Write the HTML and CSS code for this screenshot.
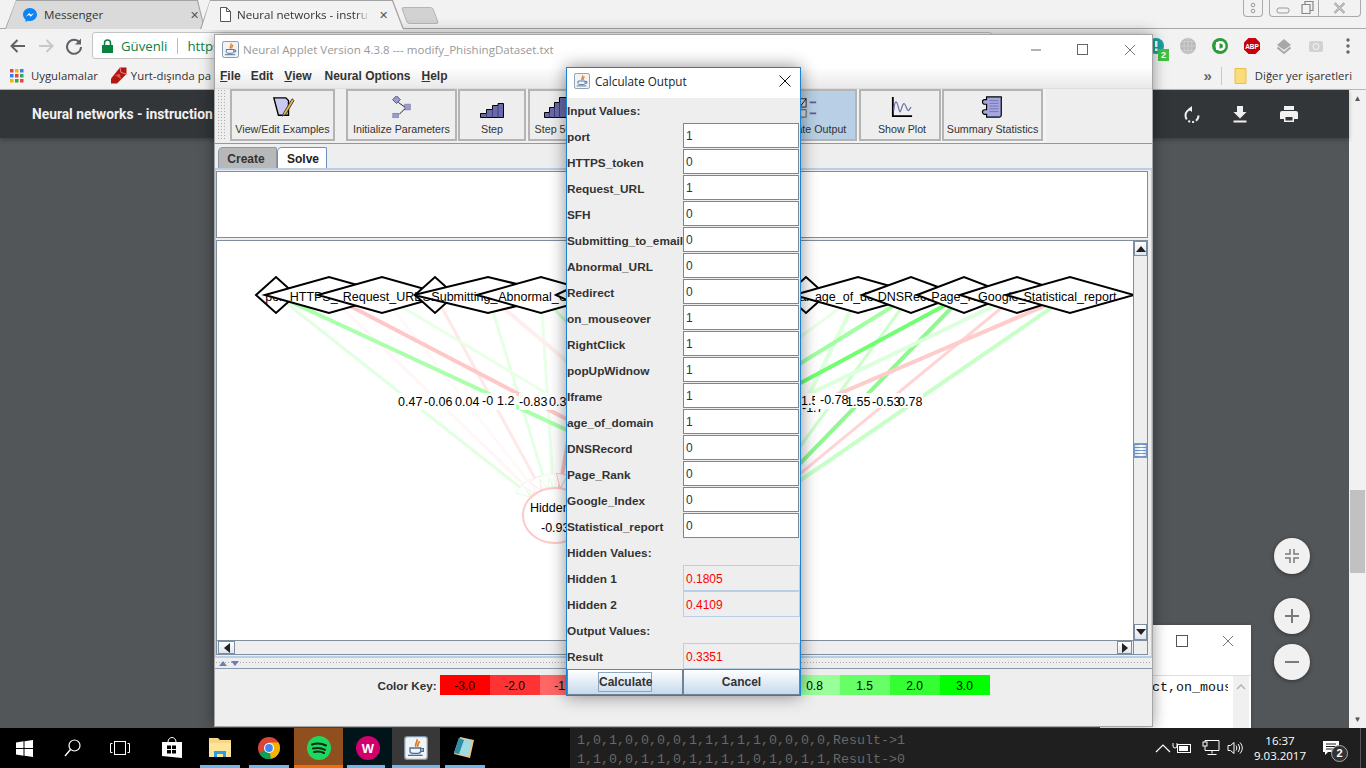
FILE: index.html
```html
<!DOCTYPE html>
<html lang="tr">
<head>
<meta charset="utf-8">
<title>Neural Applet</title>
<link rel="stylesheet" href="styles.css">
</head>
<body>
<svg class="defs" width="0" height="0" aria-hidden="true">
  <symbol id="java" viewBox="0 0 18 18">
    <rect x="0.5" y="0.5" width="17" height="17" rx="2" fill="#f1f3f5" stroke="#7f93a6"/>
    <path d="M9.5 2.5c1.5 2-2 3-0.5 5.5M11.5 4c0 1.500-2 2-1 4" fill="none" stroke="#e2761b" stroke-width="1.300"/>
    <path d="M4.500 9h8v2.500c0 1-1 1.500-2 1.500h-4c-1 0-2-.5-2-1.500zM12.500 9.500h2v2h-2" fill="none" stroke="#4a6f9c" stroke-width="1"/>
    <path d="M3 14.500h11" stroke="#4a6f9c" stroke-width="1"/>
  </symbol>
</svg>

<div class="desktop">
  <div class="browser">
    <div class="tabstrip">
      <div class="tab tab-inactive">
        <svg class="tab-ico" width="16" height="16" viewBox="0 0 16 16"><path d="M8 1C4 1 1 4 1 7.600c0 2 1 3.800 2.500 5v2.400l2.300-1.300c.7.200 1.400.3 2.200.3 4 0 7-3 7-6.400S12 1 8 1z" fill="#0a84f5"/><path d="M3.800 9.700 7.200 6l1.800 1.800L12.200 6 8.800 9.700 7 7.900z" fill="#fff"/></svg>
        <span class="tab-text">Messenger</span>
        <span class="tab-x">✕</span>
      </div>
      <div class="tab tab-active">
        <svg class="tab-ico" width="12" height="15" viewBox="0 0 12 15"><path d="M1.500 .5h6l4 4v10h-10zM7.500 .5v4h4" fill="#fff" stroke="#555"/></svg>
        <span class="tab-text tab-fade">Neural networks - instruc</span>
        <span class="tab-x">✕</span>
      </div>
      <div class="newtab"></div>
      <div class="strip-space"></div>
      <div class="mini-ctl"><svg width="6" height="12" viewBox="0 0 6 12"><circle cx="3" cy="3" r="1.800" fill="none" stroke="#999"/><circle cx="3" cy="9" r="1.800" fill="none" stroke="#999"/></svg></div>
      <div class="win-ctl">
        <svg width="28" height="16" viewBox="0 0 28 16"><rect x="7" y="8" width="12" height="5" rx="2" fill="none" stroke="#999"/></svg>
        <svg width="20" height="16" viewBox="0 0 20 16"><path d="M4 4.500h8v9h-8zM7 4.500v-3h8v9h-3" fill="none" stroke="#888" stroke-width="1.200"/></svg>
        <svg class="ctl-x" width="42" height="16" viewBox="0 0 42 16"><path d="M16 3l10 10M26 3L16 13" stroke="#999" stroke-width="2.200"/><path d="M16 3l10 10M26 3L16 13" stroke="#f2f2f2" stroke-width=".8"/></svg>
      </div>
    </div>

    <div class="toolbar">
      <svg class="nav" width="20" height="20" viewBox="0 0 20 20"><path d="M17 10H4M9.500 4 3.500 10l6 6" fill="none" stroke="#5f6368" stroke-width="2"/></svg>
      <svg class="nav" width="20" height="20" viewBox="0 0 20 20"><path d="M3 10h13M10.500 4l6 6-6 6" fill="none" stroke="#c8c8c8" stroke-width="2"/></svg>
      <svg class="nav" width="20" height="20" viewBox="0 0 20 20"><path d="M15.500 6.500A7 7 0 1 0 17 11" fill="none" stroke="#5f6368" stroke-width="2"/><path d="M17 2.500v6h-6z" fill="#5f6368"/></svg>
      <div class="omnibox">
        <svg width="11" height="14" viewBox="0 0 11 14"><rect y="6" width="11" height="8" fill="#0b8043"/><path d="M2.500 6V4a3 3 0 0 1 6 0v2" fill="none" stroke="#0b8043" stroke-width="1.500"/></svg>
        <span class="secure">Güvenli</span>
        <span class="omni-sep"></span>
        <span class="secure">https</span>
      </div>
      <div class="ext-space"></div>
      <div class="ext ext-pin"><svg width="18" height="18" viewBox="0 0 18 18"><circle cx="9" cy="9" r="8" fill="#17a3a3"/><rect x="8" y="4" width="2.500" height="6" fill="#fff"/><rect x="8" y="11.500" width="2.500" height="2.500" fill="#fff"/></svg><span class="ext-badge">2</span></div>
      <div class="ext"><svg width="18" height="18" viewBox="0 0 18 18"><circle cx="9" cy="9" r="8" fill="#b9b9b9"/><path d="M1 9h16M9 1v16M3 4.500h12M3 13.500h12" stroke="#cfcfcf"/><ellipse cx="9" cy="9" rx="4" ry="8" fill="none" stroke="#cfcfcf"/></svg></div>
      <div class="ext"><svg width="18" height="18" viewBox="0 0 18 18"><circle cx="9" cy="9" r="8" fill="#2e9b3b"/><circle cx="9.500" cy="9" r="5" fill="#fff"/><rect x="5" y="5" width="2.500" height="8" fill="#fff"/><path d="M8.500 6.500h1a2.500 2.500 0 0 1 0 5h-1z" fill="#2e9b3b"/></svg></div>
      <div class="ext"><svg width="18" height="18" viewBox="0 0 18 18"><path d="M5.500 1h7L17 5.500v7L12.500 17h-7L1 12.500v-7z" fill="#c8000b"/><text class="abp" x="9" y="11.500" text-anchor="middle">ABP</text></svg></div>
      <div class="ext"><svg width="18" height="18" viewBox="0 0 18 18"><path d="M9 2l7 6-7 5-7-5z" fill="#a8a8a8"/><path d="M2.500 10.500 9 16l6.500-5.500" fill="none" stroke="#a8a8a8" stroke-width="2"/></svg></div>
      <div class="ext"><svg width="18" height="18" viewBox="0 0 18 18"><rect x="2" y="4" width="14" height="11" rx="2" fill="#d2d2d2"/><circle cx="9" cy="9.500" r="3" fill="none" stroke="#f4f4f4"/></svg></div>
      <div class="ext"><svg width="6" height="18" viewBox="0 0 6 18"><circle cx="3" cy="3" r="1.700" fill="#666"/><circle cx="3" cy="9" r="1.700" fill="#666"/><circle cx="3" cy="15" r="1.700" fill="#666"/></svg></div>
    </div>

    <div class="bookmarks">
      <svg width="14" height="14" viewBox="0 0 14 14"><rect width="3.500" height="3.500" fill="#e8453c"/><rect x="5" width="3.500" height="3.500" fill="#f4b400"/><rect x="10" width="3.500" height="3.500" fill="#3b7de8"/><rect y="5" width="3.500" height="3.500" fill="#3b7de8"/><rect x="5" y="5" width="3.500" height="3.500" fill="#e8453c"/><rect x="10" y="5" width="3.500" height="3.500" fill="#34a853"/><rect y="10" width="3.500" height="3.500" fill="#f4b400"/><rect x="5" y="10" width="3.500" height="3.500" fill="#34a853"/><rect x="10" y="10" width="3.500" height="3.500" fill="#e8453c"/></svg>
      <span class="bm bm-apps">Uygulamalar</span>
      <svg class="ruby" width="17" height="17" viewBox="0 0 17 17"><path d="M10 0.500h6.500V7L7 16.500H1v-5z" fill="#b3150f"/><path d="M5 8l5-1 1 5z" fill="#e2564e"/><path d="M10 .5l1 5 5.500 1.500" fill="none" stroke="#e88"/></svg>
      <span class="bm">Yurt-dışında pa</span>
      <div class="bm-space"></div>
      <span class="bm-more">»</span>
      <span class="bm-sep"></span>
      <svg width="13" height="16" viewBox="0 0 13 16"><path d="M1 .5h11v15H1z" fill="#fbdc7a" stroke="#e8c148"/></svg>
      <span class="bm bm-other">Diğer yer işaretleri</span>
    </div>

    <div class="page-area">
      <div class="pdf">
        <div class="pdf-bar">
          <span class="pdf-title">Neural networks - instruction</span>
          <div class="pdf-space"></div>
          <div class="pdf-ico"><svg width="22" height="22" viewBox="0 0 22 22"><path d="M11 3 7 6l4 3z" fill="#f1f1f1"/><path d="M11 6a6.500 6.500 0 1 0 6.500 6.500" fill="none" stroke="#f1f1f1" stroke-width="2" stroke-dasharray="14 2 2 2 2 2"/></svg></div>
          <div class="pdf-ico"><svg width="22" height="22" viewBox="0 0 22 22"><path d="M8 3h6v6h3.500L11 15.500 4.500 9H8zM4.500 17.500h13v2h-13z" fill="#f1f1f1"/></svg></div>
          <div class="pdf-ico"><svg width="22" height="22" viewBox="0 0 22 22"><path d="M6 3h10v4H6z" fill="#f1f1f1"/><path d="M4 8h14a2 2 0 0 1 2 2v6h-4v3H6v-3H2v-6a2 2 0 0 1 2-2z" fill="#f1f1f1"/><path d="M7.500 14h7v3.500h-7z" fill="#323639"/></svg></div>
        </div>
        <div class="viewer">
          <div class="fab fab-fit"><svg width="16" height="16" viewBox="0 0 16 16"><path d="M6 1v5H1M10 1v5h5M6 15v-5H1M10 15v-5h5" fill="none" stroke="#7a7a7a" stroke-width="1.500"/></svg></div>
          <div class="fab fab-plus"><svg width="16" height="16" viewBox="0 0 16 16"><path d="M8 1v14M1 8h14" stroke="#7a7a7a" stroke-width="2"/></svg></div>
          <div class="fab fab-minus"><svg width="16" height="16" viewBox="0 0 16 16"><path d="M1 8h14" stroke="#7a7a7a" stroke-width="2"/></svg></div>
        </div>
      </div>
      <div class="pagebar">
        <span class="pagebar-arrow">▲</span>
        <div class="pagebar-track"></div>
        <div class="pagebar-thumb"></div>
        <div class="pagebar-rest"></div>
        <span class="pagebar-arrow">▼</span>
      </div>
    </div>
  </div>

  <div class="notepad">
    <div class="np-title">
      <svg width="12" height="12" viewBox="0 0 12 12"><rect x=".5" y=".5" width="11" height="11" fill="none" stroke="#555"/></svg>
      <svg width="12" height="12" viewBox="0 0 12 12"><path d="M1 1l10 10M11 1 1 11" stroke="#777"/></svg>
    </div>
    <div class="np-body">
      <span class="np-text">ct,on_mous</span>
      <div class="np-scroll"><svg width="10" height="6" viewBox="0 0 10 6"><path d="M1 5l4-4 4 4" fill="none" stroke="#b5b5b5" stroke-width="1.500"/></svg></div>
    </div>
  </div>

  <div class="neural">
    <div class="n-head">
      <div class="n-title">
        <svg class="n-java" width="17" height="17"><use href="#java"/></svg>
        <span class="n-caption">Neural Applet Version 4.3.8 --- modify_PhishingDataset.txt</span>
        <div class="n-controls">
          <svg width="12" height="12" viewBox="0 0 12 12"><path d="M1 6h10" stroke="#666"/></svg>
          <svg width="12" height="12" viewBox="0 0 12 12"><rect x=".5" y=".5" width="10" height="10" fill="none" stroke="#666"/></svg>
          <svg width="12" height="12" viewBox="0 0 12 12"><path d="M1 1l10 10M11 1 1 11" stroke="#777"/></svg>
        </div>
      </div>
      <div class="n-menu">
        <span class="m-item"><u>F</u>ile</span>
        <span class="m-item">Edit</span>
        <span class="m-item"><u>V</u>iew</span>
        <span class="m-item">Neural Options</span>
        <span class="m-item"><u>H</u>elp</span>
      </div>
    </div>

    <div class="n-tools">
      <div class="grip"></div>
      <div class="tbtn tb-view">
        <svg width="24" height="22" viewBox="0 0 24 24"><path d="M2 2h13l3 3v16H7z" fill="#c9c9f2" stroke="#000" stroke-width="1.500"/><path d="M22 3l-9 15-2 4 4-2 9-15z" fill="#e9b949" stroke="#333"/></svg>
        <span>View/Edit Examples</span>
      </div>
      <div class="tbtn tb-init">
        <svg width="24" height="22" viewBox="0 0 24 24"><rect x="3" y="1" width="6" height="6" fill="#9a9ad6" stroke="#556" transform="rotate(45 6 4)"/><rect x="15" y="9" width="6" height="6" fill="#9a9ad6" stroke="#88a"/><rect x="2" y="19" width="6" height="5" fill="#9a9ad6" stroke="#88a"/><path d="M8 7l7 5M15 14l-6 6" stroke="#111"/></svg>
        <span>Initialize Parameters</span>
      </div>
      <div class="tbtn tb-step">
        <svg width="24" height="22" viewBox="0 0 24 22"><path d="M.5 21.500v-4h6v-4h6v-4h5.500v-2h5.500v14z" fill="#6a6aa8" stroke="#000"/><path d="M6.500 17.500v4M12.500 13.500v8M18 9.500v12" stroke="#3d3d78"/></svg>
        <span>Step</span>
      </div>
      <div class="tbtn tb-step5">
        <svg width="24" height="22" viewBox="0 0 24 22"><path d="M.5 21.500v-5h5v-5h5v-5h5v-5h8v20z" fill="#6a6aa8" stroke="#000"/><path d="M5.500 16.500v5M10.500 11.500v10M15.500 6.500v15" stroke="#3d3d78"/></svg>
        <span>Step 500</span>
      </div>
      <div class="tbtn tb-calc">
        <svg width="36" height="22" viewBox="0 0 36 24"><rect x="10" y="3" width="7" height="9" fill="#ddd" stroke="#222"/><path d="M11 11l6-8" stroke="#000"/><rect x="10" y="15" width="7" height="8" fill="#ddd" stroke="#555"/><path d="M21 7h7M21 19h7" stroke="#5d5d9a" stroke-width="2"/></svg>
        <span>Calculate Output</span>
      </div>
      <div class="tbtn tb-plot">
        <svg width="24" height="22" viewBox="0 0 24 24"><path d="M2 1v21h21" fill="none" stroke="#000" stroke-width="2"/><path d="M3 16c1-12 3-12 5-4s2 6 4 0 3-4 5 1 2 3 5-1" fill="none" stroke="#6c6cab" stroke-width="1.300"/></svg>
        <span>Show Plot</span>
      </div>
      <div class="tbtn tb-sum">
        <svg width="24" height="22" viewBox="0 0 24 24"><path d="M5 1h16a2 2 0 0 1 0 2v18a2 2 0 0 1-2 2H5v-3H3a2 2 0 0 1 0-5h2V9H3a2 2 0 0 1 0-5h2z" fill="#a7a7e0" stroke="#000" stroke-width="1.300"/><path d="M8 5h10M8 8h10M8 11h10M8 14h10M8 17h10" stroke="#7070b8"/></svg>
        <span>Summary Statistics</span>
      </div>
    </div>

    <div class="n-tabs">
      <span class="jtab jtab-off">Create</span>
      <span class="jtab jtab-on">Solve</span>
    </div>

    <div class="tabbody">
      <div class="upper"></div>
      <div class="graphbox">
        <svg class="graph" width="916" height="399" viewBox="217 241 916 399" font-family="Liberation Sans, Arial, sans-serif" font-size="12.500">
          <g fill="none" stroke-linecap="butt">
            <line x1="276" y1="295" x2="555" y2="515" stroke="#e2ffe2" stroke-width="3"/>
            <line x1="329" y1="295" x2="555" y2="515" stroke="#fff6f6" stroke-width="3"/>
            <line x1="382" y1="295" x2="555" y2="515" stroke="#fffafa" stroke-width="3"/>
            <line x1="435" y1="295" x2="555" y2="515" stroke="#ffe8e8" stroke-width="3"/>
            <line x1="488" y1="295" x2="555" y2="515" stroke="#e4ffe4" stroke-width="3"/>
            <line x1="541" y1="295" x2="555" y2="515" stroke="#e8ffe8" stroke-width="3"/>
            <line x1="594" y1="295" x2="555" y2="515" stroke="#ffc4c4" stroke-width="4"/>
            <line x1="382" y1="295" x2="750" y2="515" stroke="#e8ffe8" stroke-width="3"/>
            <line x1="488" y1="295" x2="750" y2="515" stroke="#ffeeee" stroke-width="4"/>
            <line x1="541" y1="295" x2="750" y2="515" stroke="#ccffcc" stroke-width="3"/>
            <line x1="329" y1="295" x2="750" y2="515" stroke="#ffc8c8" stroke-width="4"/>
            <line x1="276" y1="295" x2="750" y2="515" stroke="#aaffaa" stroke-width="4"/>
            <line x1="858" y1="295" x2="555" y2="515" stroke="#e6ffe6" stroke-width="3"/>
            <line x1="858" y1="295" x2="750" y2="515" stroke="#dcffdc" stroke-width="4"/>
            <line x1="911" y1="295" x2="555" y2="515" stroke="#a0ffa0" stroke-width="4"/>
            <line x1="911" y1="295" x2="750" y2="515" stroke="#ccffcc" stroke-width="3"/>
            <line x1="964" y1="295" x2="750" y2="515" stroke="#90f890" stroke-width="4"/>
            <line x1="964" y1="295" x2="555" y2="515" stroke="#70ff70" stroke-width="4"/>
            <line x1="1017" y1="295" x2="555" y2="515" stroke="#dcffdc" stroke-width="4"/>
            <line x1="1017" y1="295" x2="750" y2="515" stroke="#ffd4d4" stroke-width="3"/>
            <line x1="1070" y1="295" x2="555" y2="515" stroke="#ffcccc" stroke-width="4"/>
            <line x1="1070" y1="295" x2="750" y2="515" stroke="#c8ffc8" stroke-width="4"/>
          </g>
          <g fill="#fff" stroke-width="1">
            <polygon points="530,497 515.300,493 522.700,483.600" stroke="#e2ffe2"/>
            <polygon points="535,493 531,478.300 521.600,485.700" stroke="#fff0f0"/>
            <polygon points="541,491 539.600,475.800 529,481.600" stroke="#ffe6e6"/>
            <polygon points="548,489 549.700,473.900 538.300,477.300" stroke="#e4ffe4"/>
            <polygon points="554,488 559,474 547,474" stroke="#e8ffe8"/>
            <polygon points="560,488 568.300,475.200 556.500,473.200" stroke="#ffc4c4"/>
          </g>
          <ellipse cx="555" cy="515.500" rx="32" ry="27.500" fill="#fff" stroke="#ffc8c8" stroke-width="2"/>
          <text x="530" y="512">Hidden 1</text>
          <text x="541" y="532">-0.93</text>
          <polygon class="dia" points="256,295 276,277 296,295 276,313"/><text x="276" y="301" text-anchor="middle">port</text>
          <polygon class="dia" points="265,295 329,277 393,295 329,313"/><text x="329" y="301" text-anchor="middle">HTTPS_token</text>
          <polygon class="dia" points="318,295 382,277 446,295 382,313"/><text x="382" y="301" text-anchor="middle">Request_URL</text>
          <polygon class="dia" points="415,295 435,277 455,295 435,313"/><text x="435" y="301" text-anchor="middle">SFH</text>
          <polygon class="dia" points="414,295 488,277 562,295 488,313"/><text x="488" y="301" text-anchor="middle">Submitting_to_email</text>
          <polygon class="dia" points="477,295 541,277 605,295 541,313"/><text x="541" y="301" text-anchor="middle">Abnormal_URL</text>
          <polygon class="dia" points="556,295 594,277 632,295 594,313"/><text x="594" y="301" text-anchor="middle">Redirect</text>
          <polygon class="dia" points="583,295 647,277 711,295 647,313"/><text x="647" y="301" text-anchor="middle">on_mouseover</text>
          <polygon class="dia" points="636,295 700,277 764,295 700,313"/><text x="700" y="301" text-anchor="middle">RightClick</text>
          <polygon class="dia" points="689,295 753,277 817,295 753,313"/><text x="753" y="301" text-anchor="middle">popUpWidnow</text>
          <polygon class="dia" points="786,295 806,277 826,295 806,313"/><text x="806" y="301" text-anchor="middle">Iframe</text>
          <polygon class="dia" points="794,295 858,277 922,295 858,313"/><text x="858" y="301" text-anchor="middle">age_of_domain</text>
          <polygon class="dia" points="862,295 911,277 960,295 911,313"/><text x="911" y="301" text-anchor="middle">DNSRecord</text>
          <polygon class="dia" points="917,295 964,277 1011,295 964,313"/><text x="964" y="301" text-anchor="middle">Page_Rank</text>
          <polygon class="dia" points="960,295 1017,277 1074,295 1017,313"/><text x="1017" y="301" text-anchor="middle">Google_Index</text>
          <polygon class="dia" points="1006,295 1070,277 1134,295 1070,313"/><text x="1070" y="301" text-anchor="middle">Statistical_report</text>
          <g fill="#fff">
            <rect x="397" y="393" width="27" height="17"/><rect x="424" y="393" width="32" height="17"/><rect x="456" y="393" width="23" height="17"/><rect x="479" y="393" width="16" height="17"/><rect x="495" y="393" width="21" height="17"/><rect x="519" y="393" width="30" height="17"/><rect x="549" y="393" width="17" height="17"/>
            <rect x="801" y="402" width="20" height="11"/>
          </g>
          <text x="398" y="406">0.47</text>
          <text x="424" y="406">-0.06</text>
          <text x="455" y="406">0.04</text>
          <text x="482" y="405">-0</text>
          <text x="497" y="405">1.2</text>
          <text x="519" y="406">-0.83</text>
          <text x="549" y="406">0.3</text>
          <text x="802" y="412">-1.7</text>
          <rect x="801" y="393" width="122" height="15" fill="#fff"/>
          <text x="801" y="405">1.5</text>
          <rect x="815" y="393" width="29" height="16" fill="#fff"/>
          <text x="820" y="404">-0.78</text>
          <text x="846" y="406">1.55</text>
          <text x="872" y="406">-0.53</text>
          <text x="898" y="406">0.78</text>
        </svg>
        <div class="vscroll">
          <div class="sbtn sb-up"><svg width="10" height="6" viewBox="0 0 10 6"><path d="M5 0l5 6H0z" fill="#222"/></svg></div>
          <div class="v-track-a"></div>
          <div class="v-thumb"></div>
          <div class="v-track-b"></div>
          <div class="sbtn sb-down"><svg width="10" height="6" viewBox="0 0 10 6"><path d="M0 0h10L5 6z" fill="#222"/></svg></div>
        </div>
        <div class="hscroll">
          <div class="sbtn sb-left"><svg width="6" height="10" viewBox="0 0 6 10"><path d="M6 0v10L0 5z" fill="#222"/></svg></div>
          <div class="h-track"></div>
          <div class="sbtn sb-right"><svg width="6" height="10" viewBox="0 0 6 10"><path d="M0 0v10l6-5z" fill="#222"/></svg></div>
        </div>
        <div class="corner"></div>
      </div>
    </div>

    <div class="splitter">
      <svg width="8" height="5" viewBox="0 0 8 5"><path d="M4 0l4 5H0z" fill="#6a80b0"/></svg>
      <svg width="8" height="5" viewBox="0 0 8 5"><path d="M0 0h8L4 5z" fill="#6a80b0"/></svg>
    </div>

    <div class="keypanel">
      <span class="key-label">Color Key:</span>
      <div class="key-cell k1">-3.0</div>
      <div class="key-cell k2">-2.0</div>
      <div class="key-cell k3">-1.5</div>
      <div class="key-cell k4">-0.8</div>
      <div class="key-cell k5">-0.2</div>
      <div class="key-cell k6">0.0</div>
      <div class="key-cell k7">0.2</div>
      <div class="key-cell k8">0.8</div>
      <div class="key-cell k9">1.5</div>
      <div class="key-cell k10">2.0</div>
      <div class="key-cell k11">3.0</div>
    </div>
  </div>

  <div class="dialog">
    <div class="d-title">
      <svg width="16" height="16"><use href="#java"/></svg>
      <span class="d-caption">Calculate Output</span>
      <svg class="d-x" width="12" height="12" viewBox="0 0 12 12"><path d="M.5.500l11 11M11.500.5l-11 11" stroke="#111"/></svg>
    </div>
    <div class="d-grid">
      <div class="lbl lbl-wide first">Input Values:</div>
      <div class="lbl">port</div><div class="fld">1</div>
      <div class="lbl">HTTPS_token</div><div class="fld">0</div>
      <div class="lbl">Request_URL</div><div class="fld">1</div>
      <div class="lbl">SFH</div><div class="fld">0</div>
      <div class="lbl">Submitting_to_email</div><div class="fld">0</div>
      <div class="lbl">Abnormal_URL</div><div class="fld">0</div>
      <div class="lbl">Redirect</div><div class="fld">0</div>
      <div class="lbl">on_mouseover</div><div class="fld">1</div>
      <div class="lbl">RightClick</div><div class="fld">1</div>
      <div class="lbl">popUpWidnow</div><div class="fld">1</div>
      <div class="lbl">Iframe</div><div class="fld">1</div>
      <div class="lbl">age_of_domain</div><div class="fld">1</div>
      <div class="lbl">DNSRecord</div><div class="fld">0</div>
      <div class="lbl">Page_Rank</div><div class="fld">0</div>
      <div class="lbl">Google_Index</div><div class="fld">0</div>
      <div class="lbl">Statistical_report</div><div class="fld">0</div>
      <div class="lbl lbl-wide">Hidden Values:</div>
      <div class="lbl">Hidden 1</div><div class="out">0.1805</div>
      <div class="lbl">Hidden 2</div><div class="out">0.4109</div>
      <div class="lbl lbl-wide">Output Values:</div>
      <div class="lbl">Result</div><div class="out">0.3351</div>
    </div>
    <div class="d-buttons">
      <div class="dbtn"><span class="focus">Calculate</span></div>
      <div class="dbtn">Cancel</div>
    </div>
  </div>
</div>

<div class="taskbar">
  <div class="ghost ghost-a">3.  Classification: Credit Card</div>
  <div class="ghost ghost-b">1,1,1,0,1,1,1,1,1,1,0,1,1,0,1,1,Result-&gt;1<br>1,0,1,0,0,0,0,1,1,1,1,1,0,0,0,0,Result-&gt;1<br>1,1,0,0,1,1,0,1,1,1,1,0,1,0,1,1,Result-&gt;0</div>
  <div class="tb-icon w-start"><svg width="17" height="17" viewBox="0 0 17 17"><path d="M0 2.500 7.500 1.300v6.700H0zM8.500 1.200 17 0v8H8.500zM0 9h7.500v6.700L0 14.500zM8.500 9H17v8l-8.500-1.200z" fill="#fff"/></svg></div>
  <div class="tb-icon w-search"><svg width="17" height="18" viewBox="0 0 17 18"><circle cx="10.500" cy="6.500" r="5.500" fill="none" stroke="#fff" stroke-width="1.200"/><path d="M6.500 10.500 1 17" stroke="#fff" stroke-width="1.400"/></svg></div>
  <div class="tb-icon w-task"><svg width="20" height="14" viewBox="0 0 20 14"><rect x="4.500" y=".5" width="11" height="13" fill="none" stroke="#fff"/><path d="M2.500 2.500H.5v9h2M17.500 2.500h2v9h-2" fill="none" stroke="#fff"/></svg></div>
  <div class="tb-icon w-store"><svg width="22" height="24" viewBox="0 0 22 24"><path d="M1 6h20v16L1 20z" fill="#fff"/><path d="M7 6c0-6 8-6 8 0" fill="none" stroke="#fff"/><path d="M6 9.500h4V13H6zM11 9.500h4V13h-4zM6 14h4v3.500H6zM11 14h4v3.500h-4z" fill="#000"/></svg></div>
  <div class="tb-icon w-app"><svg width="22" height="20" viewBox="0 0 22 20"><path d="M0 0h9l2 2h11v16H0z" fill="#f6d77e"/><path d="M0 5h22v14H0z" fill="#fce59b"/><path d="M5 13h12v6h-3v-3H8v3H5z" fill="#2a9fe0"/></svg><span class="run"></span></div>
  <div class="tb-gap"></div>
  <div class="tb-icon w-app"><svg width="22" height="22" viewBox="0 0 22 22"><circle cx="11" cy="11" r="11" fill="#db4437"/><path d="M11 11 1.500 16.500A11 11 0 0 0 11 22z" fill="#0f9d58"/><path d="M11 22a11 11 0 0 0 9.500-16.500H11z" fill="#f4b400"/><path d="M11 11 1.500 16.500A11 11 0 0 0 13 21.800z" fill="#0f9d58"/><circle cx="11" cy="11" r="5" fill="#fff"/><circle cx="11" cy="11" r="3.900" fill="#4285f4"/></svg><span class="run"></span></div>
  <div class="tb-gap2"></div>
  <div class="tb-tile t-spotify"><svg width="24" height="24" viewBox="0 0 24 24"><circle cx="12" cy="12" r="12" fill="#1ed760"/><path d="M5 8.500c5-1.500 10-1 14 1M6 12.500c4-1 8.500-.7 12 1.300M7 16c3.500-.8 7-.5 10 1" fill="none" stroke="#0b2a14" stroke-width="2" stroke-linecap="round"/></svg></div>
  <div class="tb-tile t-wow"><svg width="26" height="26" viewBox="0 0 26 26"><circle cx="13" cy="13" r="12" fill="#d1006c"/><text class="wow" x="13" y="17.500" text-anchor="middle">W</text></svg><span class="run"></span></div>
  <div class="tb-tile t-java"><svg width="24" height="24"><use href="#java"/></svg><span class="run"></span></div>
  <div class="tb-tile t-note"><svg width="24" height="24" viewBox="0 0 24 24"><path d="M7 1l14 3-4 18L1 18z" fill="#e7c88a"/><path d="M6 2l13 3-4 15L1 17z" fill="#9fdbe0"/><path d="M1 17 6 2l5 2-5 14z" fill="#2f8da5"/></svg><span class="run"></span></div>
  <div class="tb-space"></div>
  <div class="tray">
    <svg class="tray-up" width="16" height="10" viewBox="0 0 16 10"><path d="M1 9l7-7 7 7" fill="none" stroke="#fff" stroke-width="1.200"/></svg>
    <svg width="20" height="14" viewBox="0 0 20 14"><rect x="5.500" y="3.500" width="13" height="8" fill="none" stroke="#fff"/><rect x="7" y="5" width="9" height="5" fill="#fff"/><path d="M1 2v3a2 2 0 0 0 4 0V2" fill="none" stroke="#fff"/></svg>
    <svg width="18" height="16" viewBox="0 0 18 16"><path d="M3 .5h14v10H3zM10 10.500v3M5.500 14.500h9" fill="none" stroke="#fff"/><rect x="1" y="2" width="4" height="4" fill="#1f1f1f" stroke="#fff"/></svg>
    <svg class="tray-vol" width="16" height="14" viewBox="0 0 16 14"><path d="M1 4.500h2.500L7 1.500v11l-3.500-3H1z" fill="none" stroke="#fff"/><path d="M9 4.500c1 1.500 1 3.500 0 5M11 3c2 2.500 2 5.500 0 8M13 1.500c3 3.500 3 7.500 0 11" fill="none" stroke="#fff"/></svg>
  </div>
  <div class="clock"><span>16:37</span><span>9.03.2017</span></div>
  <div class="notif"><svg width="16" height="15" viewBox="0 0 16 15"><path d="M0 0h16v11H5l-3 3v-3H0z" fill="#fff"/><path d="M3 3h10M3 5.500h10M3 8h7" stroke="#1f1f1f"/></svg><span class="notif-badge">2</span></div>
  <div class="show-desktop"></div>
</div>
</body>
</html>
```

FILE: styles.css
```css
* { box-sizing: border-box; }
html, body { margin: 0; padding: 0; }
body {
  width: 1366px; height: 768px; overflow: hidden;
  display: flex; flex-direction: column;
  font-family: "Liberation Sans", Arial, sans-serif;
  background: #525659;
}
svg { display: block; flex: none; }
.defs { position: absolute; }

.desktop { position: relative; height: 728px; flex: none; overflow: hidden; }
.browser { height: 728px; display: flex; flex-direction: column; background: #f2f2f2; }

/* tab strip */
.tabstrip { height: 29px; flex: none; display: flex; background: #f2f2f2; border-bottom: 1px solid #a9a9a9; padding-left: 5px; }
.tab { position: relative; height: 29px; display: flex; align-items: center; font: 11.600px "Open Sans", sans-serif; color: #333; }
.tab::before { content: ""; position: absolute; inset: 0; background: #a3a3a3; }
.tab::after { content: ""; position: absolute; inset: 1px 1px 0 1px; }
.tab > * { position: relative; z-index: 1; }
.tab-inactive { width: 200px; padding-left: 17px; }
.tab-inactive::before { clip-path: polygon(0 100%, 11px 0, 193px 0, 200px 100%); }
.tab-inactive::after { background: #dadada; clip-path: polygon(0 100%, 10px 0, 191px 0, 198px 100%); }
.tab-active { width: 204px; margin-left: -5px; padding-left: 19px; z-index: 1; }
.tab-active::before { clip-path: polygon(0 100%, 10px 0, 193px 0, 204px 100%); }
.tab-active::after { background: #f2f2f2; clip-path: polygon(0 100%, 9px 0, 191px 0, 202px 100%); bottom: -1px; }
.tab-ico { margin-right: 4px; }
.tab-text { width: 135px; white-space: nowrap; overflow: hidden; margin-left: 2px; }
.tab-fade { -webkit-mask-image: linear-gradient(90deg, #000 88%, transparent 98%); mask-image: linear-gradient(90deg, #000 88%, transparent 98%); }
.tab-x { width: 12px; font-size: 11px; color: #555; margin-left: 7px; }
.tab-inactive .tab-x { margin-left: 11px; }
.newtab { width: 32px; height: 17px; margin: 7px 0 0 0; background: #d2d2d2; border: 1px solid #b5b5b5; border-radius: 3px; transform: skewX(20deg); }
.strip-space { flex: 1; }
.mini-ctl { width: 20px; height: 17px; border: 1px solid #aaa; border-top: 0; border-radius: 0 0 4px 4px; display: flex; align-items: center; justify-content: center; margin-right: 6px; }
.win-ctl { width: 92px; height: 17px; border: 1px solid #aaa; border-top: 0; border-radius: 0 0 4px 4px; display: flex; margin-right: 5px; }
.ctl-x { border-left: 1px solid #aaa; }

/* toolbar */
.toolbar { height: 33px; flex: none; display: flex; align-items: center; padding-left: 8px; padding-right: 6px; gap: 8px; }
.omnibox { width: 900px; height: 27px; background: #fff; border: 1px solid #c4c4c4; border-radius: 3px; display: flex; align-items: center; padding-left: 9px; font: 13.200px "Open Sans", sans-serif; color: #0b8043; }
.secure { margin-left: 8px; }
.omni-sep { width: 1px; height: 16px; background: #bbb; margin: 0 1px 0 10px; }
.ext-space { flex: 1; }
.ext { width: 24px; display: flex; justify-content: center; position: relative; }
.ext-badge { position: absolute; right: -1px; top: 12px; width: 11px; height: 12px; background: #43c243; color: #fff; font: bold 9px "Liberation Sans", sans-serif; text-align: center; line-height: 12px; }
.abp { font: bold 6.500px "Liberation Sans", sans-serif; fill: #fff; }

/* bookmarks */
.bookmarks { height: 28px; flex: none; display: flex; align-items: center; padding-left: 10px; padding-right: 14px; border-bottom: 1px solid #b8b8b8; }
.bm { font: 11.350px "Open Sans", sans-serif; color: #333; white-space: nowrap; }
.bm-apps { margin-left: 7px; }
.ruby { margin: 0 4px 0 12px; }
.bm-space { flex: 1; }
.bm-more { font: bold 15px "Liberation Sans", sans-serif; color: #666; margin-right: 9px; }
.bm-sep { width: 1px; height: 18px; background: #c8c8c8; margin-right: 12px; }
.bm-other { margin-left: 8px; }

/* pdf viewer */
.page-area { flex: 1; display: flex; min-height: 0; }
.pdf { flex: 1; display: flex; flex-direction: column; min-width: 0; }
.pdf-bar { height: 48px; flex: none; background: #323639; display: flex; align-items: center; padding: 0 36px 0 32px; box-shadow: 0 2px 4px rgba(0,0,0,.25); position: relative; }
.pdf-title { font: bold 13.800px Roboto, sans-serif; color: #f1f1f1; white-space: nowrap; }
.pdf-space { flex: 1; }
.pdf-ico { width: 48.500px; display: flex; justify-content: center; }
.viewer { flex: 1; background: #525659; display: flex; flex-direction: column; align-items: flex-end; padding: 400px 39px 0 0; }
.fab { width: 36px; height: 36px; border-radius: 50%; background: #f1f1f1; display: flex; align-items: center; justify-content: center; box-shadow: 0 1px 4px rgba(0,0,0,.4); }
.fab-plus { margin-top: 24px; }
.fab-minus { margin-top: 10px; }
.pagebar { width: 17px; flex: none; background: #f1f1f1; display: flex; flex-direction: column; align-items: center; }
.pagebar-arrow { font-size: 8px; height: 17px; line-height: 17px; color: #555; }
.pagebar-track { height: 383px; }
.pagebar-thumb { width: 15px; height: 83px; background: #c1c1c1; }
.pagebar-rest { flex: 1; }

/* notepad behind */
.notepad { position: absolute; left: 1100px; top: 625px; width: 151px; height: 103px; background: #fff; display: flex; flex-direction: column; box-shadow: 0 0 4px rgba(0,0,0,.2); }
.np-title { height: 50px; flex: none; display: flex; align-items: flex-start; padding: 10px 17px 0 76px; gap: 34px; }
.np-body { flex: 1; display: flex; justify-content: flex-end; border-top: 1px solid #ddd; padding-top: 4px; }
.np-text { font: 13.330px "Liberation Mono", monospace; color: #111; margin-right: 5px; width: 76px; overflow: hidden; }
.np-scroll { width: 16px; background: #f0f0f0; margin: -4px 2px 0 0; padding: 8px 3px 0; }

/* main java window */
.neural { position: absolute; left: 214px; top: 34px; width: 939px; height: 693px; background: #eee; border: 1px solid #a5a5a5; display: flex; flex-direction: column; box-shadow: 0 0 14px rgba(0,0,0,.4); }
.n-head { height: 53px; flex: none; background: linear-gradient(180deg, #fff 0, #fff 60%, #e9e9e9 100%); }
.n-title { height: 32px; display: flex; align-items: center; padding: 0 0 3px 7px; }
.n-java { margin-right: 4px; }
.n-caption { font: 11.550px "Open Sans", sans-serif; color: #999; white-space: nowrap; }
.n-controls { margin-left: auto; display: flex; gap: 35px; padding-right: 16px; }
.n-menu { display: flex; padding: 0 0 2px 5px; height: 20px; align-items: center; font: bold 12px "Liberation Sans", sans-serif; color: #333; }
.m-item:nth-child(2) { margin-left: 10px; }
.m-item:nth-child(3) { margin-left: 11px; }
.m-item:nth-child(4) { margin-left: 13px; }
.m-item:nth-child(5) { margin-left: 11px; }

.n-tools { height: 55px; flex: none; display: flex; align-items: flex-start; padding: 0 0 0 2px; background: linear-gradient(90deg, #eee 0, #f4f4f4 830px, #eee 832px); border-top: 1px solid #ddd; }
.grip { width: 10px; height: 52px; margin-right: 3px; background-image: radial-gradient(#aaa 0.7px, transparent 0.8px); background-size: 3px 3px; }
.tbtn { height: 52px; display: flex; flex-direction: column; align-items: center; justify-content: flex-start; padding-top: 5px; gap: 5px; border: 2px solid #b4b4b4; background: #eee; font: 10.700px "Liberation Sans", sans-serif; color: #333; white-space: nowrap; overflow: hidden; }
.tb-view { width: 105px; margin-right: 11px; }
.tb-init { width: 111px; margin-right: 1px; }
.tb-step { width: 68px; margin-right: 2px; }
.tb-step5 { width: 56px; margin-right: 172px; }
.tb-calc { width: 101px; margin-right: 2px; background: #b8cfe5; }
.tb-plot { width: 82px; margin-right: 1px; padding-left: 4px; }
.tb-sum { width: 101px; }

.n-tabs { height: 25px; flex: none; display: flex; padding: 3px 0 0 3px; border-top: 1px solid #8a9aaa; }
.jtab { height: 22px; font: bold 12px "Liberation Sans", sans-serif; display: flex; align-items: center; justify-content: center; color: #333; border: 1px solid #8a9aaa; border-bottom: 0; border-radius: 5px 2px 0 0; }
.jtab-off { width: 59px; background: #b8b8b8; padding-right: 3px; }
.jtab-on { width: 50px; background: #fff; padding-left: 2px; border-color: #6d8fc0; color: #222; }

.tabbody { height: 490px; flex: none; background: #eee; border: solid #b8cfe5; border-width: 2px 1px; padding: 1px 3px 1px 0; display: flex; flex-direction: column; gap: 2px; }
.upper { height: 67px; flex: none; background: #fff; border: 1px solid #7e8e9e; }
.graphbox { flex: 1; min-height: 0; border: 1px solid #7e8e9e; display: grid; grid-template-columns: 916px 14px; grid-template-rows: 399px 14px; background: #fff; }
.graph { background: #fff; }
.graph text { fill: #000; }
.dia { fill: #fff; stroke: #000; stroke-width: 2; }
.vscroll { background: #eee; display: flex; flex-direction: column; border-left: 1px solid #7e8e9e; }
.sbtn { background: linear-gradient(180deg, #fff, #dde6ef); border: 1px solid #7e8e9e; display: flex; align-items: center; justify-content: center; flex: none; }
.sb-up { height: 15px; }
.sb-down { height: 16px; }
.v-track-a { height: 187px; flex: none; }
.v-thumb { height: 15px; flex: none; border: 1px solid #7d9dc9; background: linear-gradient(90deg, #cfe0f2, #fff 60%, #cfe0f2), repeating-linear-gradient(180deg, #7d9dc9 0 1px, transparent 1px 3px); background-blend-mode: multiply; }
.v-track-b { flex: 1; }
.hscroll { display: flex; background: #eee; border-top: 1px solid #7e8e9e; }
.sb-left { width: 17px; margin-left: 1px; }
.sb-right { width: 15px; margin-right: 1px; }
.h-track { flex: 1; }
.corner { background: #eee; border: solid #7e8e9e; border-width: 1px 0 0 1px; }

.splitter { height: 11px; flex: none; display: flex; gap: 4px; align-items: center; padding-left: 4px; background-color: #eee; background-image: radial-gradient(#a8a8a8 .6px, transparent .7px); background-size: 3px 3px; background-position: 0 3px; background-repeat: repeat-x; border-bottom: 1px solid #8a9aaa; }
.keypanel { flex: 1; display: flex; justify-content: center; align-items: flex-start; padding-top: 6px; }
.key-label { font: bold 11.700px/22px "Liberation Sans", sans-serif; color: #333; width: 62px; height: 20px; }
.key-cell { width: 50px; height: 20px; font: 12px/22px "Liberation Sans", sans-serif; color: #000; text-align: center; }
.k1 { background: #f00; } .k2 { background: #f33; } .k3 { background: #f66; } .k4 { background: #f99; } .k5 { background: #fcc; }
.k6 { background: #fff; } .k7 { background: #cfc; } .k8 { background: #9f9; } .k9 { background: #6f6; } .k10 { background: #3f3; } .k11 { background: #0f0; }

/* dialog */
.dialog { position: absolute; left: 566px; top: 67px; width: 235px; height: 629px; background: #eee; border: 1px solid #1a83d6; display: flex; flex-direction: column; box-shadow: 0 0 16px rgba(0,0,0,.45); }
.d-title { height: 30px; flex: none; background: #fff; display: flex; align-items: center; padding: 0 9px 5px 7px; }
.d-caption { font: 11.700px "Open Sans", sans-serif; color: #222; margin-left: 5px; flex: 1; }
.d-grid { display: grid; grid-template-columns: 116px 117px; grid-template-rows: 25px; grid-auto-rows: 26px; }
.lbl { font: bold 11.800px "Liberation Sans", sans-serif; color: #333; display: flex; align-items: center; white-space: nowrap; padding-top: 1px; }
.lbl-wide { grid-column: 1 / 3; }
.fld { width: 116px; height: 25px; background: #fff; border: 1px solid #7a8794; font: 12px "Liberation Sans", sans-serif; color: #333; padding: 1px 0 0 2px; display: flex; align-items: center; }
.out { border: 1px solid #b8cfe5; font: 12px "Liberation Sans", sans-serif; color: #f00; padding: 1px 0 0 2px; display: flex; align-items: center; }
.d-buttons { flex: 1; display: grid; grid-template-columns: 116px 117px; }
.dbtn { background: linear-gradient(180deg, #fff, #c6d9ec); border: 1px solid #6f8396; font: bold 12px "Liberation Sans", sans-serif; color: #333; display: flex; align-items: center; justify-content: center; }
.focus { border: 1px solid #8ea7c0; padding: 2px 0; width: 54px; text-align: center; }

/* taskbar */
.taskbar { position: relative; height: 40px; flex: none; display: flex; overflow: hidden; background: linear-gradient(90deg, #000 570px, #1f1f1f 570px); color: #fff; }
.ghost { position: absolute; font: 13.330px/19.500px "Liberation Mono", monospace; color: #686868; white-space: nowrap; }
.ghost-a { left: 378px; top: -17px; }
.ghost-b { left: 577px; top: -17px; }
.taskbar > div:not(.ghost) { z-index: 1; }
.tb-icon, .tb-tile { position: relative; display: flex; align-items: center; justify-content: center; flex: none; height: 40px; }
.w-start { width: 49px; }
.w-search { width: 47px; }
.w-task { width: 48px; }
.w-store { width: 56px; }
.w-app { width: 40px; }
.tb-gap { width: 9px; }
.tb-gap2 { width: 5px; }
.t-spotify { width: 49px; background: #8f4f1e; }
.t-spotify::after { content: ""; position: absolute; left: 0; right: 0; bottom: 0; height: 3px; background: #f26c0a; }
.t-wow { width: 49px; background: #00141a; }
.t-java { width: 48px; background: #383838; }
.t-note { width: 40px; margin-left: 5px; }
.run { position: absolute; left: 0; right: 0; bottom: 0; height: 3px; background: #6fb6ea; }
.t-wow .run { left: 4px; right: 7px; }
.tb-space { flex: 1; }
.tray { display: flex; align-items: center; gap: 10px; padding-right: 7px; }
.tray-up { margin-right: -9px; }
.tray-vol { margin-left: -3px; }
.clock { width: 60px; display: flex; flex-direction: column; align-items: center; justify-content: center; font: 11.500px "Open Sans", sans-serif; color: #fff; }
.notif { position: relative; width: 50px; display: flex; align-items: center; justify-content: center; padding-right: 8px; }
.notif-badge { position: absolute; left: 21px; top: 17px; width: 17px; height: 17px; border-radius: 50%; border: 1px solid #aaa; background: #333; font: bold 11px/15px "Liberation Sans", sans-serif; text-align: center; color: #fff; }
.show-desktop { width: 6px; border-left: 1px solid #555; }
.wow { font: bold 13px "Liberation Sans", sans-serif; fill: #fff; }
```
